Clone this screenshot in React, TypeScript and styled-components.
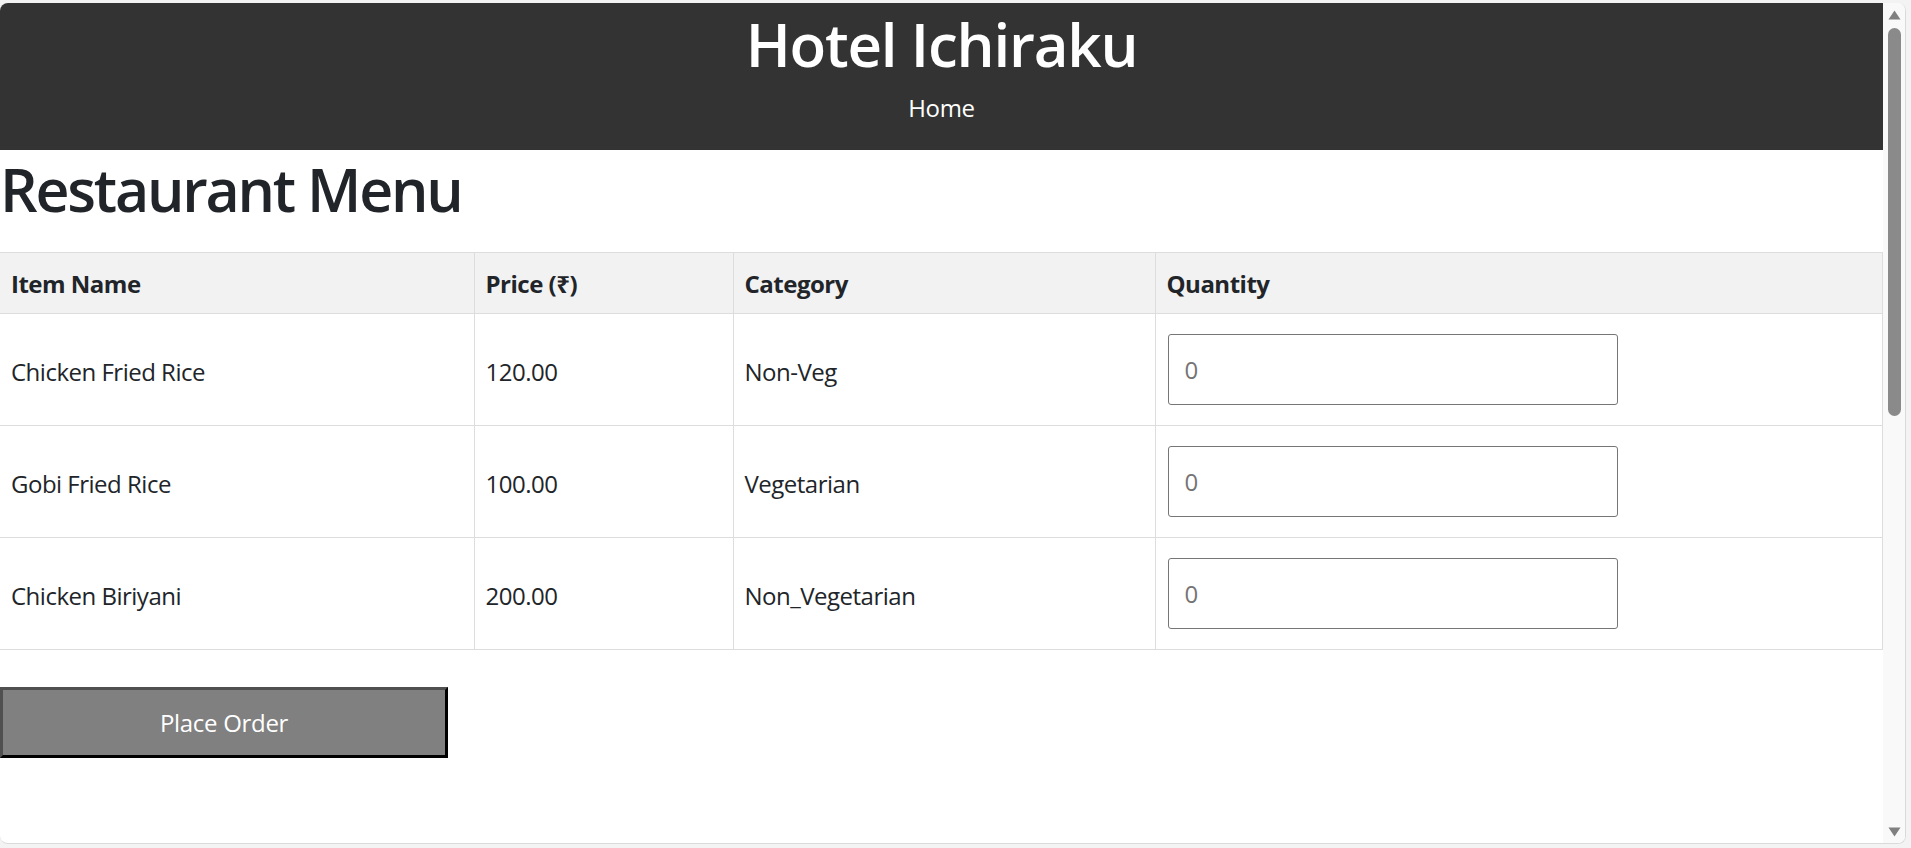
import styled, { createGlobalStyle } from "styled-components";

type MenuItem = {
  name: string;
  price: number;
  category: string;
};

const items: MenuItem[] = [
  { name: "Chicken Fried Rice", price: 120, category: "Non-Veg" },
  { name: "Gobi Fried Rice", price: 100, category: "Vegetarian" },
  { name: "Chicken Biriyani", price: 200, category: "Non_Vegetarian" },
];

const columns = [
  { label: "Item Name", width: 474 },
  { label: "Price (₹)", width: 259 },
  { label: "Category", width: 422 },
  { label: "Quantity", width: 727 },
];

export default function App() {
  return (
    <>
      <GlobalStyle />
      <Window>
        <Main>
          <Header>
            <Title>Hotel Ichiraku</Title>
            <Nav>
              <NavLink href="#">Home</NavLink>
            </Nav>
          </Header>

          <PageTitle>Restaurant Menu</PageTitle>

          <MenuTable>
            <colgroup>
              {columns.map((c) => (
                <col key={c.label} style={{ width: c.width }} />
              ))}
            </colgroup>
            <thead>
              <tr>
                {columns.map((c) => (
                  <HeadCell key={c.label}>{c.label}</HeadCell>
                ))}
              </tr>
            </thead>
            <tbody>
              {items.map((item) => (
                <tr key={item.name}>
                  <Cell>{item.name}</Cell>
                  <Cell>{item.price.toFixed(2)}</Cell>
                  <Cell>{item.category}</Cell>
                  <Cell $control>
                    <QuantityInput type="number" min={0} placeholder="0" />
                  </Cell>
                </tr>
              ))}
            </tbody>
          </MenuTable>

          <OrderButton type="button">Place Order</OrderButton>
        </Main>

        <Rail>
          <Arrow width="13" height="10" viewBox="0 0 13 10">
            <path d="M6.5 0.5 L12.5 9.5 L0.5 9.5 Z" />
          </Arrow>
          <Thumb />
          <RailSpace />
          <Arrow width="13" height="10" viewBox="0 0 13 10">
            <path d="M0.5 0.5 L12.5 0.5 L6.5 9.5 Z" />
          </Arrow>
        </Rail>
      </Window>
    </>
  );
}

const GlobalStyle = createGlobalStyle`
  html, body {
    margin: 0;
    padding: 0;
  }

  body {
    background: #f3f3f3;
    color: #212529;
    font-family: "Open Sans", "Noto Sans", Arial, sans-serif;
    overflow: hidden;
  }
`;

const Window = styled.div`
  display: flex;
  box-sizing: border-box;
  width: 1906px;
  height: 841px;
  margin-top: 3px;
  background: #fff;
  border-right: 1px solid #dadada;
  border-bottom: 1px solid #dadada;
  border-radius: 8px;
  overflow: hidden;
`;

const Main = styled.main`
  display: flex;
  flex: 1;
  flex-direction: column;
  align-items: flex-start;
  min-width: 0;
`;

const Header = styled.header`
  box-sizing: border-box;
  width: 100%;
  height: 147px;
  padding-top: 5px;
  background: #333;
  color: #fff;
  text-align: center;
`;

const Title = styled.h1`
  margin: 0 0 10px;
  font-size: 60px;
  font-weight: 600;
  line-height: 72px;
  letter-spacing: -1.2px;
`;

const Nav = styled.nav`
  line-height: 36px;
`;

const NavLink = styled.a`
  color: #fff;
  font-size: 24px;
  letter-spacing: -0.3px;
  text-decoration: none;
`;

const PageTitle = styled.h1`
  margin: 3px 0 27px;
  font-size: 59px;
  font-weight: 600;
  line-height: 72px;
  letter-spacing: -2.2px;
`;

const MenuTable = styled.table`
  width: 1882px;
  border-collapse: collapse;
  table-layout: fixed;
  font-size: 24px;
  line-height: 36px;
  letter-spacing: -0.5px;
`;

const HeadCell = styled.th`
  padding: 13px 11px 11px;
  background: #f2f2f2;
  border: 1px solid #dddddd;
  font-weight: 700;
  text-align: left;

  &:first-child {
    border-left: none;
  }
`;

const Cell = styled.td<{ $control?: boolean }>`
  padding: ${({ $control }) => ($control ? "20px 11px" : "22px 11px 18px")};
  border: 1px solid #dddddd;
  vertical-align: middle;

  &:first-child {
    border-left: none;
  }
`;

const QuantityInput = styled.input`
  display: block;
  box-sizing: border-box;
  width: 450px;
  height: 71px;
  margin-left: 1px;
  padding: 0 16px;
  border: 1px solid #767676;
  border-radius: 3px;
  font-family: inherit;
  font-size: 24px;
  color: #212529;

  &::placeholder {
    color: #757575;
  }
`;

const OrderButton = styled.button`
  box-sizing: border-box;
  width: 448px;
  height: 71px;
  margin-top: 37px;
  background: #808080;
  border: 3px solid;
  border-color: #505050 #000 #000 #505050;
  color: #fff;
  font-family: inherit;
  font-size: 24px;
  letter-spacing: -0.3px;
  cursor: pointer;
`;

const Rail = styled.aside`
  display: flex;
  flex-direction: column;
  align-items: center;
  width: 22px;
  padding: 7px 0 6px;
  background: #f9f9f9;
`;

const Arrow = styled.svg`
  fill: #808080;
  flex-shrink: 0;
`;

const Thumb = styled.div`
  width: 13px;
  height: 388px;
  margin-top: 8px;
  background: #8a8a8a;
  border-radius: 7px;
`;

const RailSpace = styled.div`
  flex: 1;
`;
